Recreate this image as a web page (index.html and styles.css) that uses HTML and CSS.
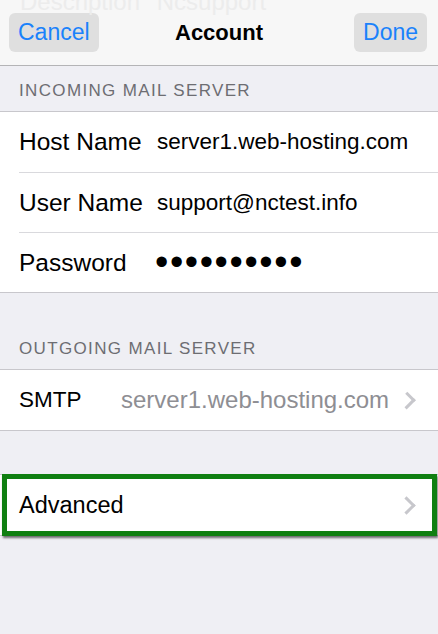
FILE: index.html
```html
<html>

<head>
    <title>Account</title>
    <meta name="viewport" content="width=device-width, initial-scale=1">
    <link rel="stylesheet" href="styles.css">
</head>

<body>
    <header class="nav">
        <div class="ghost">Description <span>Ncsupport</span></div>
        <div class="nav-left"><button class="nav-btn">Cancel</button></div>
        <h1 class="nav-title">Account</h1>
        <div class="nav-right"><button class="nav-btn">Done</button></div>
    </header>
    <main>
        <h2 class="section-head first">INCOMING MAIL SERVER</h2>
        <div class="group incoming">
            <div class="row">
                <span class="label">Host Name</span>
                <span class="value">server1.web-hosting.com</span>
            </div>
            <div class="row">
                <span class="label">User Name</span>
                <span class="value">support@nctest.info</span>
            </div>
            <div class="row">
                <span class="label">Password</span>
                <span class="value dots">&bull;&bull;&bull;&bull;&bull;&bull;&bull;&bull;&bull;&bull;</span>
            </div>
        </div>

        <h2 class="section-head">OUTGOING MAIL SERVER</h2>
        <div class="group">
            <div class="row link">
                <span class="label short">SMTP</span>
                <span class="detail">server1.web-hosting.com</span>
                <span class="chevron"></span>
            </div>
        </div>

        <div class="group spaced">
            <div class="row link">
                <span class="label">Advanced</span>
                <span class="chevron"></span>
            </div>
            <div class="mark"></div>
        </div>
    </main>
</body>

</html>
```

FILE: styles.css
```css
html {
    width: 100vw;
    max-width: 100%;
}

body {
    padding: 0px;
    margin: 0px;
    width: 100%;
    min-height: 634px;
    background: #efeff4;
    font-family: "Liberation Sans", Arial, sans-serif;
    color: #000;
}

.nav {
    position: relative;
    height: 65px;
    background: #f7f7f7;
    border-bottom: 1px solid #b4b4b6;
    display: grid;
    grid-template-columns: 1fr auto 1fr;
    align-items: center;
    overflow: hidden;
}

/* content scrolled up under the bar */
.ghost {
    position: absolute;
    left: 20px;
    top: -10px;
    font-size: 24px;
    line-height: 24px;
    color: #ececec;
    white-space: nowrap;
}

.ghost span {
    margin-left: 10px;
}

.nav-left {
    padding-left: 9px;
}

.nav-right {
    padding-right: 11px;
    text-align: right;
}

.nav-btn {
    height: 39px;
    padding: 0px 9px;
    border: none;
    border-radius: 6px;
    background: #dfdfdf;
    color: #1a82fb;
    font-family: "Liberation Sans", Arial, sans-serif;
    font-size: 23px;
}

.nav-title {
    margin: 0px;
    font-size: 22px;
    font-weight: bold;
}

.section-head {
    margin: 0px;
    padding: 46px 19px 10px;
    font-size: 17px;
    line-height: 20px;
    font-weight: normal;
    letter-spacing: 1.35px;
    color: #6d6d72;
}

.section-head.first {
    padding-top: 15px;
}

.group {
    position: relative;
    background: #fff;
    border-top: 1px solid #c8c7cc;
    border-bottom: 1px solid #c8c7cc;
    padding-left: 19px;
}

.group.spaced {
    margin-top: 43px;
}

.row {
    height: 60px;
    box-sizing: border-box;
    display: flex;
    align-items: center;
    padding-right: 21px;
    font-size: 23.5px;
}

.row + .row {
    border-top: 1px solid #d9d9dd;
}

.label {
    width: 138px;
    flex-shrink: 0;
}

.incoming .label {
    font-size: 24.5px;
}

.label.short {
    width: 102px;
    font-size: 22.5px;
}

.value {
    font-size: 22.5px;
    white-space: nowrap;
}

.dots {
    font-size: 38px;
    letter-spacing: 1.6px;
    margin-left: -2px;
}

.detail {
    flex: 1;
    font-size: 24px;
    color: #8e8e93;
    white-space: nowrap;
}

.chevron {
    margin-left: auto;
    width: 10px;
    height: 10px;
    border-top: 3px solid #c7c7cc;
    border-right: 3px solid #c7c7cc;
    transform: rotate(45deg);
    margin-right: 4px;
}

.detail + .chevron {
    margin-left: 12px;
}

.mark {
    position: absolute;
    left: 2px;
    right: 1px;
    top: -1px;
    bottom: -1px;
    border: 5px solid #0f7f11;
    box-shadow: 1px 2px 2px rgba(0, 0, 0, 0.55);
}
```
